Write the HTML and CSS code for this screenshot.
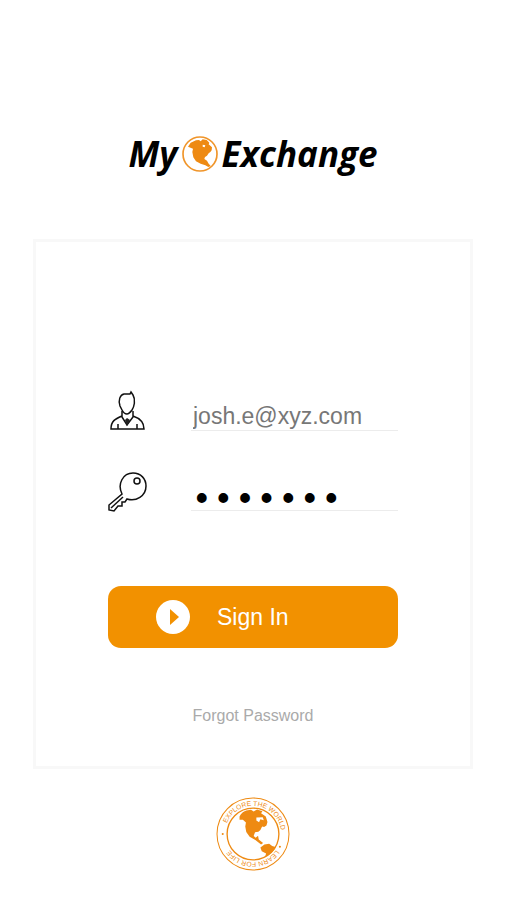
FILE: index.html
```html
<!DOCTYPE html>
<html lang="en">
  <head>
    <meta charset="UTF-8" />
    <meta name="viewport" content="width=device-width, initial-scale=1.0" />
    <title>My Exchange</title>
    <link rel="stylesheet" href="styles.css">
  </head>
  <body>
    <h1 class="logo">
      <span>My</span>
      <svg class="logo-globe" viewBox="0 0 108 108" aria-hidden="true">
        <circle cx="54" cy="54" r="51" fill="none" stroke="#f0952a" stroke-width="5" />
        <path fill="#ee8a12" d="M18 32 L26 20 L42 13 L51 12 L56 16 L62 10 L74 12 L82 20 L80 25 L90 34 L89 43 L85 48 L80 52 L75 59 L69 63 L67 69 L75 74 L79 82 L86 90 L79 93 L70 88 L56 83 L42 76 L34 64 L31 48 L33 38 Z" />
        <path fill="#fff" d="M62 26 L70 28 L68 34 L62 32 Z" />
      </svg>
      <span>Exchange</span>
    </h1>

    <main class="card">
      <form class="login-form">
        <div class="field">
          <label for="email" aria-label="Email">
            <svg class="field-icon" viewBox="3 0 41 46">
              <path d="M15 18 C13 12 15 7 19 6 H25 L26 4 L28 7 C31 12 29 19 27 22 Q24 26 22 26 Q19 26 17 22 Z" />
              <path d="M17 23 V29 L22 37 L28 29 V23 M17 28 C10 31 6 33 6 41 H39 C39 34 34 30 28 28 M13 36 V41 M32 36 V41" />
              <path class="solid" d="M20 32 L22 30 L25 32 L22 38 Z" />
            </svg>
          </label>
          <input type="email" id="email" value="josh.e@xyz.com" />
        </div>
        <div class="field">
          <label for="password" aria-label="Password">
            <svg class="field-icon" viewBox="3 0 41 46">
              <path d="M17 26 C12 16 18 5 28 5 C36 5 41 11 41 18 C41 28 31 34 22 31 L20 34 L17 34 L17 38 L13 38 L9 43 L4 42 V37 Z" />
              <path d="M18 29 L6 40" />
              <circle cx="32" cy="13" r="3" />
            </svg>
          </label>
          <input type="password" id="password" value="1234567" />
        </div>
        <button type="submit" class="sign-in">
          <svg class="play-icon" viewBox="0 0 34 34" aria-hidden="true">
            <circle cx="17" cy="17" r="17" fill="#fff" />
            <path fill="#f29100" d="M14 9 L23 17 L14 25 Z" />
          </svg>
          <span>Sign In</span>
        </button>
      </form>
      <a class="forgot" href="#">Forgot Password</a>
    </main>

    <footer>
      <svg class="seal" viewBox="0 0 220 220" role="img" aria-label="Explore the world, learn for life">
        <defs>
          <path id="seal-top" d="M26 110 A84 84 0 0 1 194 110" />
          <path id="seal-bottom" d="M194 110 A84 84 0 0 1 26 110" />
        </defs>
        <circle class="ring" cx="110" cy="110" r="107" />
        <circle class="ring inner" cx="110" cy="110" r="77" />
        <text><textPath href="#seal-top" startOffset="54%" text-anchor="middle">EXPLORE THE WORLD</textPath></text>
        <text><textPath href="#seal-bottom" startOffset="50%" text-anchor="middle">LEARN FOR LIFE</textPath></text>
        <circle class="land" cx="20" cy="110" r="3" />
        <circle class="land" cx="190" cy="148" r="3" />
        <path class="land" d="M70 58 Q76 44 90 40 L104 38 L112 43 L122 37 L138 42 L134 48 L148 58 L153 74 L150 85 L143 89 L137 88 L132 98 L126 103 L116 105 L112 116 L118 121 L125 115 L127 126 L140 137 L134 141 L117 128 L100 118 L90 104 L87 88 L89 76 L80 68 L70 68 Z" />
        <path class="land" d="M132 150 L144 141 L158 139 L167 146 L177 149 Q170 168 146 178 L149 168 L136 161 Z" />
        <path d="M120 61 L139 60 L142 69 L132 66 L128 75 L120 70 Z" fill="#fff" />
      </svg>
    </footer>
  </body>
</html>
```
FILE: styles.css
```css
* {
  box-sizing: border-box;
}
body {
  margin: 0;
  padding: 132px 33px 24px;
  background-color: #fff;
  font-family: "Liberation Sans", Arial, sans-serif;
}
.logo {
  display: flex;
  justify-content: center;
  align-items: center;
  gap: 4px;
  margin: 0 0 64px;
  color: #000;
  font-family: "Open Sans", sans-serif;
  font-size: 35px;
  font-style: italic;
  font-weight: 700;
  line-height: 43px;
}
.logo-globe {
  width: 36px;
  height: 36px;
}
.card {
  padding: 144px 72px 40px;
  border: 3px solid #f8f8f8;
  text-align: center;
}
.login-form {
  margin-bottom: 58px;
}
.field {
  display: flex;
  align-items: flex-end;
  gap: 42px;
  height: 48px;
  margin-bottom: 32px;
}
.field-icon {
  display: block;
  width: 41px;
  height: 46px;
  fill: none;
  stroke: #111;
  stroke-width: 1.5;
}
.field-icon .solid {
  fill: #222;
  stroke: none;
}
.field input {
  flex: 1;
  min-width: 0;
  height: 32px;
  margin: 0 0 3px;
  padding: 4px 2px 0;
  border: none;
  border-bottom: 1px solid #ececec;
  background: none;
  color: #777;
  font-family: inherit;
  font-size: 23px;
}
.field input[type="password"] {
  padding: 12px 0 0;
  color: #000;
  font-family: "Liberation Mono", monospace;
  font-size: 36px;
}
.sign-in {
  display: flex;
  align-items: center;
  gap: 27px;
  width: 100%;
  height: 62px;
  margin-top: 72px;
  padding: 0 48px;
  border: none;
  border-radius: 13px;
  background-color: #f29100;
  color: #fff;
  font-family: inherit;
  font-size: 23px;
  cursor: pointer;
}
.play-icon {
  width: 34px;
  height: 34px;
}
.forgot {
  color: #aaa;
  font-size: 16px;
  line-height: 20px;
  text-decoration: none;
}
footer {
  margin-top: 28px;
  text-align: center;
}
.seal {
  width: 74px;
  height: 74px;
}
.seal .ring {
  fill: none;
  stroke: #ee8a12;
  stroke-width: 3;
}
.seal .inner {
  stroke-width: 4;
}
.seal .land {
  fill: #ee8a12;
}
.seal text {
  fill: #ee8a12;
  font-family: "Liberation Sans", Arial, sans-serif;
  font-size: 20px;
}
```
